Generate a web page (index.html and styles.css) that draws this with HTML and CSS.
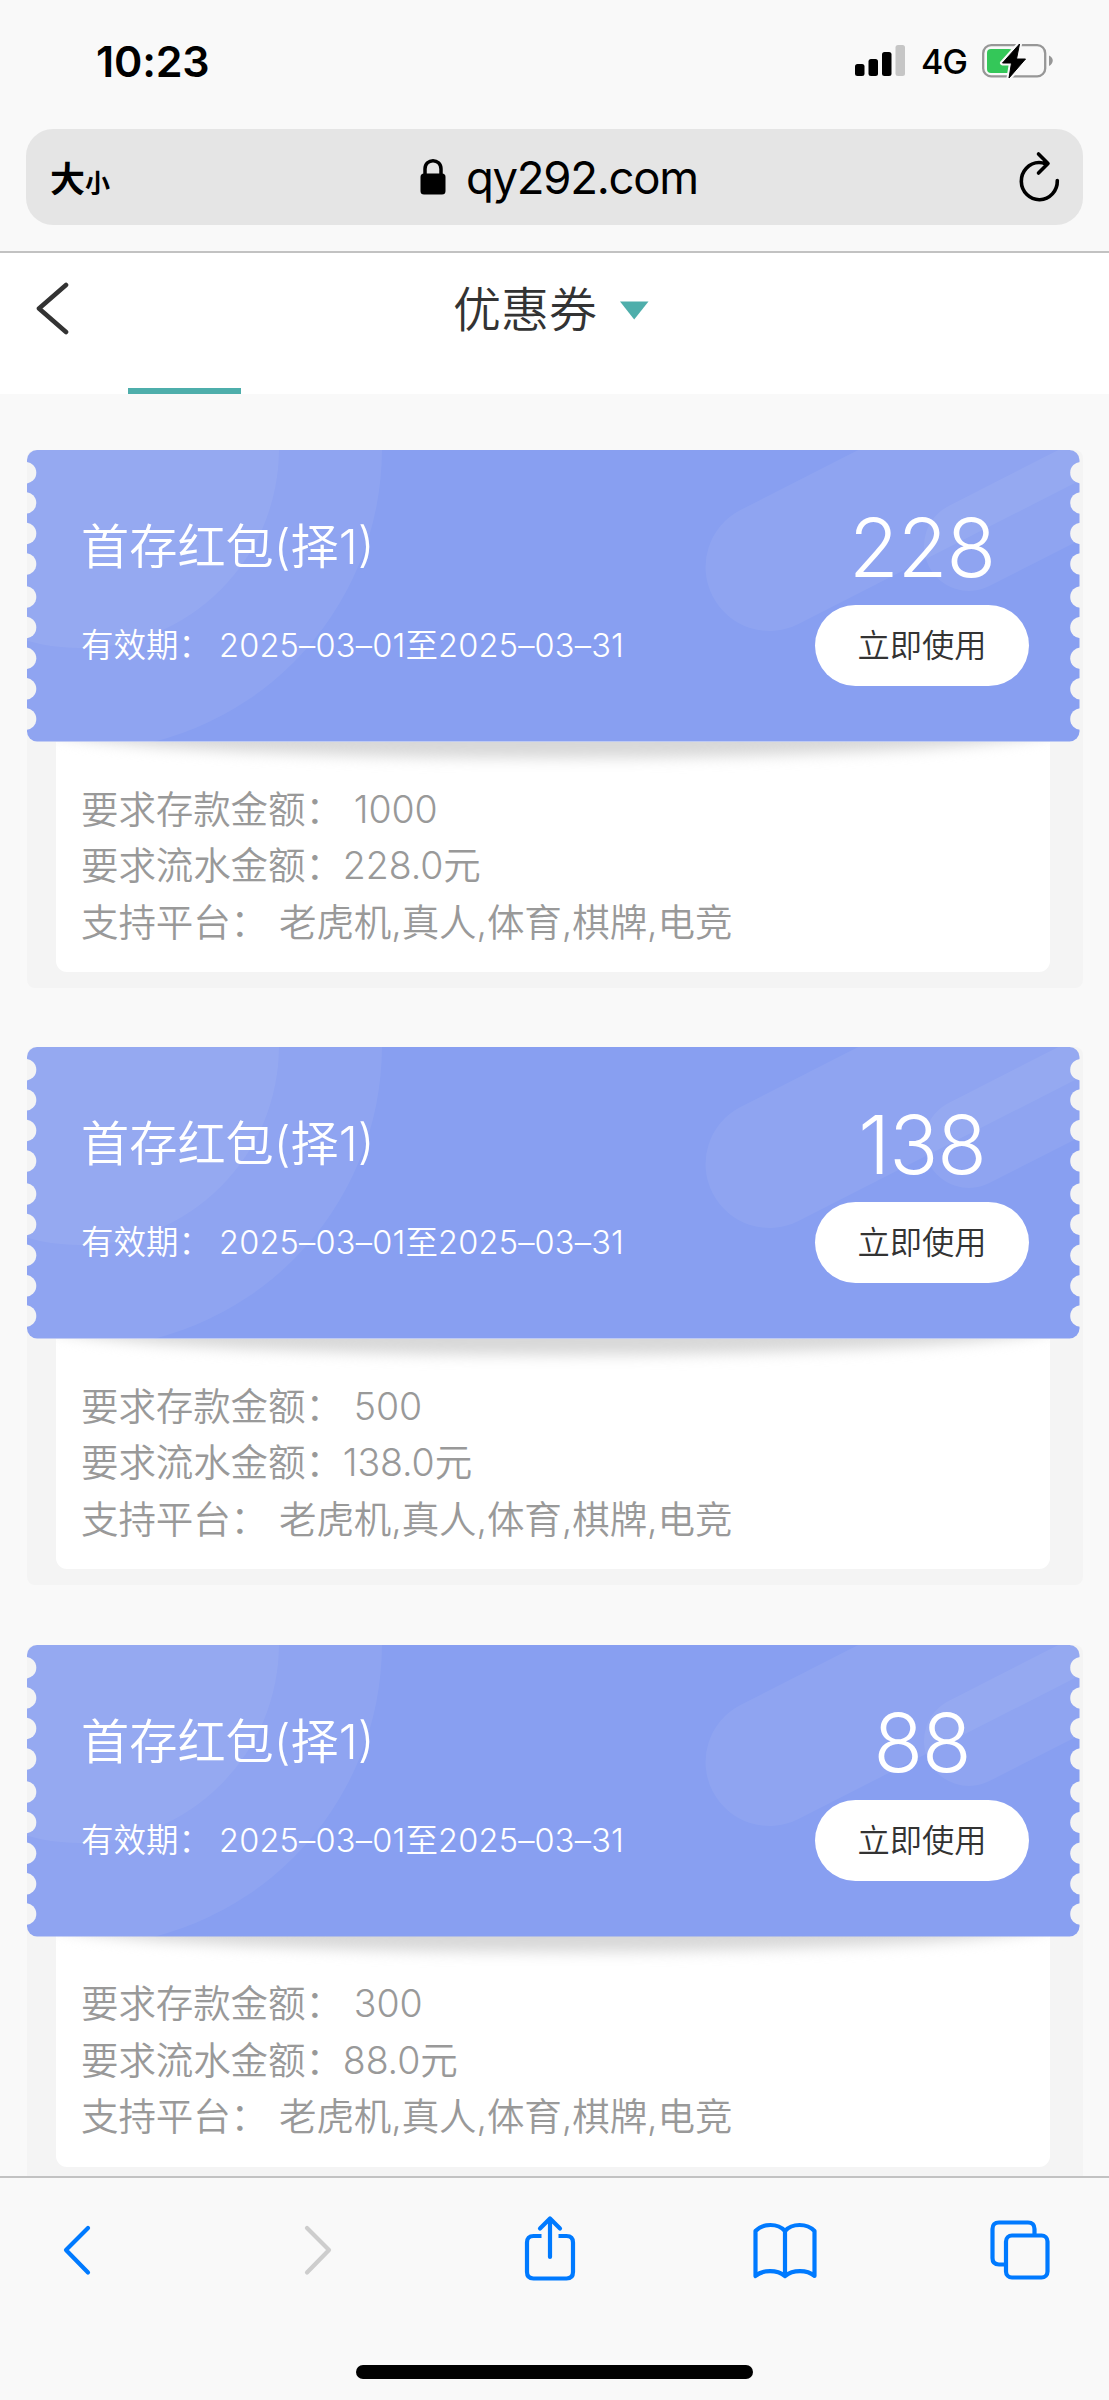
FILE: index.html
```html
<!DOCTYPE html>
<html lang="zh-CN">
<head>
<meta charset="utf-8">
<title>优惠券</title>
<link rel="stylesheet" href="styles.css">
</head>
<body>
<svg class="defs" width="0" height="0" aria-hidden="true">
  <defs>
    <mask id="perforation" maskUnits="userSpaceOnUse" x="0" y="0" width="1053" height="292">
      <rect width="1052.5" height="291.5" rx="10" fill="#fff"/>
      <g fill="#000">
        <circle cx="-1.5" cy="22.7" r="10.8"/><circle cx="-1.5" cy="52.9" r="10.8"/><circle cx="-1.5" cy="83.5" r="10.8"/>
        <circle cx="-1.5" cy="114" r="10.8"/><circle cx="-1.5" cy="147" r="10.8"/><circle cx="-1.5" cy="177.5" r="10.8"/>
        <circle cx="-1.5" cy="208.3" r="10.8"/><circle cx="-1.5" cy="238.8" r="10.8"/><circle cx="-1.5" cy="269" r="10.8"/>
        <circle cx="1054" cy="22.7" r="10.8"/><circle cx="1054" cy="52.9" r="10.8"/><circle cx="1054" cy="83.5" r="10.8"/>
        <circle cx="1054" cy="114" r="10.8"/><circle cx="1054" cy="147" r="10.8"/><circle cx="1054" cy="177.5" r="10.8"/>
        <circle cx="1054" cy="208.3" r="10.8"/><circle cx="1054" cy="238.8" r="10.8"/><circle cx="1054" cy="269" r="10.8"/>
      </g>
    </mask>
    <symbol id="ticket" viewBox="0 0 1053 292">
      <g mask="url(#perforation)">
        <rect width="1053" height="292" fill="#889ff1"/>
        <g fill="#fff" fill-opacity=".06">
          <circle cx="53" cy="-1" r="302"/>
          <circle cx="53" cy="-1" r="199"/>
        </g>
        <g stroke="#fff" stroke-opacity=".06" stroke-linecap="round">
          <path d="M742.5 117L1142.5 -87" stroke-width="128"/>
          <path d="M942 96L1142 -6" stroke-width="90"/>
        </g>
      </g>
    </symbol>
  </defs>
</svg>
<div class="screen">
  <div class="status">
    <span class="clock">10:23</span>
    <div class="indicators">
      <svg class="signal" width="52" height="32" viewBox="0 0 52 32">
        <rect x="0" y="19" width="9.5" height="12" rx="2.5"/><rect x="13.5" y="14" width="9.5" height="17" rx="2.5"/>
        <rect x="27" y="7" width="9.5" height="24" rx="2.5"/><rect x="40.5" y="0" width="9.5" height="31" rx="2.5" fill="#c6c6c6"/>
      </svg>
      <span class="network">4G</span>
      <svg class="battery" width="72" height="36" viewBox="0 0 72 36">
        <rect x="1.2" y="2.2" width="62" height="31.2" rx="8" fill="none" stroke="#979797" stroke-width="2.3"/>
        <path d="M67 12.5C72 14.500 72 20.500 67 23Z" fill="#979797"/>
        <rect x="5" y="6" width="26" height="24" rx="4" fill="#34c759"/>
        <path d="M37.500 1L20.500 20H29.500L27 35L43.500 16H34.500Z" stroke="#f9f9f9" stroke-width="5" stroke-linejoin="round"/>
        <path d="M37.500 1L20.500 20H29.500L27 35L43.500 16H34.500Z" stroke="#000" stroke-linejoin="round"/>
      </svg>
    </div>
  </div>
  <div class="address-wrap">
    <div class="address">
      <span class="text-size"><span class="big">大</span><span class="small">小</span></span>
      <div class="host">
        <svg width="26" height="36" viewBox="0 0 26 36"><rect x=".5" y="14.500" width="25" height="21" rx="3.500"/><path d="M5 16V10C5 -1 21 -1 21 10V16" fill="none" stroke="#000" stroke-width="3.500"/></svg>
        <span>qy292.com</span>
      </div>
      <svg class="reload" width="44" height="52" viewBox="0 0 44 52" fill="none" stroke="#000" stroke-width="3.600" stroke-linecap="round" stroke-linejoin="round"><path d="M29 13Q25.500 11.500 22 11.500A18 18.600 0 1 0 40.300 29.500M21.500 3L31 12.500L21.500 22"/></svg>
    </div>
  </div>
  <header class="nav">
    <div class="nav-row">
      <svg class="back" width="36" height="54" viewBox="0 0 36 54"><path d="M32 4L5 27.500L32 51" fill="none" stroke="#333" stroke-width="4.600" stroke-linecap="round" stroke-linejoin="round"/></svg>
      <h1>优惠券</h1>
      <svg class="caret" width="29" height="19" viewBox="0 0 29 19"><path d="M0 .5H28.500L14.200 18.500Z" fill="#4eaeab"/></svg>
    </div>
    <div class="tab-line"></div>
  </header>
  <main class="coupons">
    <article class="coupon">
      <div class="ticket">
        <svg class="ticket-bg" width="1053" height="292"><use href="#ticket"/></svg>
        <div class="info"><h2>首存红包(择1)</h2><p><span>有效期：</span><span class="dates">2025–03–01至2025–03–31</span></p></div>
        <div class="action"><strong>228</strong><button>立即使用</button></div>
      </div>
      <div class="detail">
        <p><span>要求存款金额：</span><span class="gap">1000</span></p>
        <p><span>要求流水金额：</span><span>228.0元</span></p>
        <p><span>支持平台：</span><span class="gap">老虎机,真人,体育,棋牌,电竞</span></p>
      </div>
    </article>
    <article class="coupon">
      <div class="ticket">
        <svg class="ticket-bg" width="1053" height="292"><use href="#ticket"/></svg>
        <div class="info"><h2>首存红包(择1)</h2><p><span>有效期：</span><span class="dates">2025–03–01至2025–03–31</span></p></div>
        <div class="action"><strong>138</strong><button>立即使用</button></div>
      </div>
      <div class="detail">
        <p><span>要求存款金额：</span><span class="gap">500</span></p>
        <p><span>要求流水金额：</span><span>138.0元</span></p>
        <p><span>支持平台：</span><span class="gap">老虎机,真人,体育,棋牌,电竞</span></p>
      </div>
    </article>
    <article class="coupon">
      <div class="ticket">
        <svg class="ticket-bg" width="1053" height="292"><use href="#ticket"/></svg>
        <div class="info"><h2>首存红包(择1)</h2><p><span>有效期：</span><span class="dates">2025–03–01至2025–03–31</span></p></div>
        <div class="action"><strong>88</strong><button>立即使用</button></div>
      </div>
      <div class="detail">
        <p><span>要求存款金额：</span><span class="gap">300</span></p>
        <p><span>要求流水金额：</span><span>88.0元</span></p>
        <p><span>支持平台：</span><span class="gap">老虎机,真人,体育,棋牌,电竞</span></p>
      </div>
    </article>
  </main>
  <footer class="toolbar">
    <div class="tools">
      <svg width="30" height="70" viewBox="0 0 30 70"><path d="M26 13L4 35L26 57.500"/></svg>
      <svg class="off" width="30" height="70" viewBox="0 0 30 70"><path d="M4 13L26 35L4 57.500"/></svg>
      <svg width="52" height="70" viewBox="0 0 52 70"><path d="M26 5V42M16 13.500L26 3.500L36 13.500"/><path stroke-linecap="butt" d="M17.500 21H9.500Q3 21 3 27.500V57Q3 63.500 9.500 63.500H42.500Q49 63.500 49 57V27.500Q49 21 42.500 21H34.500"/></svg>
      <svg width="64" height="70" viewBox="0 0 64 70"><path d="M2.500 61V16C10 8 25 8 32 16C39 8 54 8 61.500 16V61C54 54.500 40 54.500 32 61C24 54.500 10 54.500 2.500 61ZM32 16V61"/></svg>
      <svg width="60" height="70" viewBox="0 0 60 70"><path d="M44.500 20V14Q44.500 7.500 38 7.500H9Q2.500 7.500 2.500 14V43Q2.500 49.500 9 49.500H15"/><rect x="16" y="20.500" width="41.500" height="42" rx="6"/></svg>
    </div>
    <div class="home"></div>
  </footer>
</div>
</body>
</html>
```
FILE: styles.css
```css
* { box-sizing: border-box; margin: 0; padding: 0; }
body { background: #f9f9f9; font-family: Inter, "Noto Sans CJK SC", sans-serif; }
svg { display: block; flex: none; }
.defs { position: absolute; }
.screen { width: 1109px; height: 2400px; display: flex; flex-direction: column; overflow: hidden; }

.status { height: 129px; padding: 0 55px 0 96px; display: flex; align-items: flex-start; justify-content: space-between; flex: none; }
.clock { font-size: 43px; font-weight: 600; line-height: 50px; padding-top: 36px; letter-spacing: -.2px; }
.indicators { display: flex; padding-top: 43px; }
.signal { margin: 2px 14px 0 0; }
.network { font-size: 34px; font-weight: 450; line-height: 38px; width: 61px; letter-spacing: -.8px; }

.address-wrap { height: 124px; padding: 0 26px; border-bottom: 2px solid #c2c2c2; flex: none; }
.address { height: 96px; border-radius: 27px; background: #e5e5e5; display: flex; align-items: center; padding: 0 22px 0 24px; }
.text-size { width: 370px; display: flex; align-items: baseline; font-weight: 600; padding-bottom: 2px; }
.big { font-size: 35px; }
.small { font-size: 25px; }
.host { flex: 1; display: flex; align-items: center; gap: 20px; font-size: 45.500px; letter-spacing: -1.300px; }

.nav { height: 141px; background: #fff; display: flex; flex-direction: column; justify-content: space-between; flex: none; }
.nav-row { display: flex; align-items: center; padding: 28px 0 0 34px; height: 82px; }
.nav h1 { font-size: 48px; font-weight: 350; color: #333; line-height: 54px; margin-left: 383px; padding-top: 4px; }
.caret { margin: 5px 0 0 23px; }
.tab-line { width: 113px; height: 6px; margin-left: 128px; background: #4eaeab; }

.coupons { flex: 1; min-height: 0; overflow: hidden; padding: 56px 26px 0 27px; display: flex; flex-direction: column; gap: 59.300px; }
.coupon { height: 538px; background: #f4f4f4; border-radius: 8px; flex: none; }
.ticket { position: relative; z-index: 1; width: 1053px; height: 291.500px; display: flex; justify-content: space-between; color: #fff; padding: 0 51px 0 54px; }
.ticket-bg { position: absolute; left: 0; top: 0; }
.info { position: relative; padding-top: 63px; }
.info h2 { font-size: 48.200px; font-weight: 350; line-height: 68px; }
.info p { display: flex; margin-top: 41px; font-size: 32.500px; font-weight: 350; line-height: 48px; }
.dates { margin-left: 8px; letter-spacing: .2px; }
.action { position: relative; width: 214px; padding-top: 53px; display: flex; flex-direction: column; align-items: center; }
.action strong { font-size: 81px; font-weight: 300; line-height: 90px; letter-spacing: -1px; }
.action button { margin-top: 12px; width: 214px; height: 81px; padding-bottom: 5px; border: 0; border-radius: 41px; background: #fff; color: #333; font: 350 32.300px Inter, "Noto Sans CJK SC", sans-serif; }

.detail { position: relative; overflow: hidden; margin-left: 29px; width: 994px; height: 230.500px; background: #fff; border-radius: 0 0 11px 11px; padding: 40px 0 0 25px; color: #999; font-size: 37.500px; font-weight: 350; line-height: 56.500px; letter-spacing: -.1px; }
.detail::before { content: ""; position: absolute; left: -12px; right: -12px; top: -46px; height: 62px; border-radius: 50%; background: #d8d8d8; filter: blur(7px); }
.detail p { display: flex; position: relative; }
.gap { margin-left: 11px; }

.toolbar { height: 224px; border-top: 2px solid #c2c2c2; background: #f9f9f9; display: flex; flex-direction: column; align-items: center; justify-content: space-between; padding: 37px 0 21px; flex: none; }
.tools { width: 100%; padding-left: 62px; display: grid; grid-template-columns: 241px 221px 229px 237px 60px; fill: none; stroke: #007aff; stroke-width: 4.200; stroke-linecap: round; stroke-linejoin: round; }
.off { stroke: #cdcdcd; }
.home { width: 397px; height: 14px; border-radius: 7px; background: #000; }
```
